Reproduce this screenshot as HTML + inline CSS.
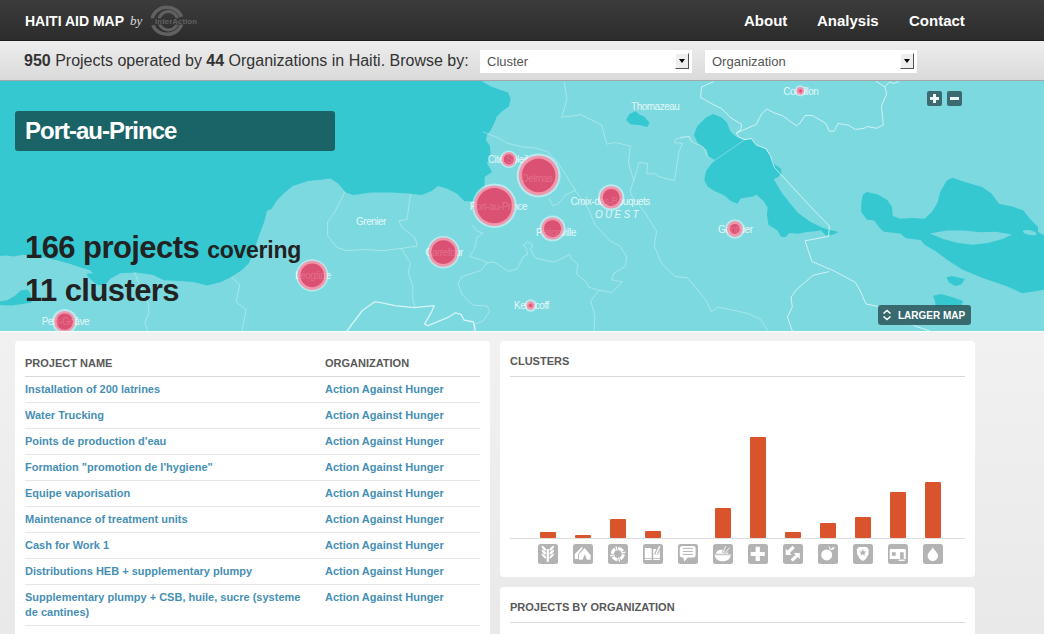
<!DOCTYPE html>
<html><head><meta charset="utf-8"><title>Haiti Aid Map</title>
<style>
*{box-sizing:border-box;margin:0;padding:0}
html,body{width:1044px;height:634px;overflow:hidden;background:#efefef;background:linear-gradient(#f1f1f1 332px,#e9e9e9 634px);font-family:"Liberation Sans",Arial,sans-serif;}
body{position:relative}
#hdr{position:absolute;left:0;top:0;width:1044px;height:41px;background:linear-gradient(#3c3c3c,#2c2c2c);border-bottom:1px solid #1c1c1c}
#hdr .t{position:absolute;left:25px;top:13px;font-weight:bold;font-size:14px;color:#fff;line-height:16px;white-space:nowrap}
#hdr .by{position:absolute;left:130px;top:13px;font-family:"Liberation Serif",serif;font-style:italic;font-size:13px;color:#ddd;line-height:15px}
#hdr .nav{position:absolute;top:12px;font-weight:bold;font-size:15px;color:#fff;line-height:18px}
#logo{position:absolute;left:148px;top:3px}
#sub{position:absolute;left:0;top:41px;width:1044px;height:40px;background:linear-gradient(#ededed,#dadada);border-bottom:1px solid #a5a5a5}
#sub .txt{position:absolute;left:24px;top:10px;font-size:16px;color:#333;line-height:19px;white-space:nowrap}
.sel{position:absolute;top:9px;height:23px;width:212px;background:#fff;font-size:13px;color:#555;line-height:23px;padding-left:7px}
.sel i{position:absolute;right:3px;top:3px;width:14px;height:16px;background:#eee;border:1px solid;border-color:#fff #555 #555 #fff}
.sel i:after{content:"";position:absolute;left:3px;top:5px;border:3px solid transparent;border-top:4px solid #000;border-bottom:0}
#map{position:absolute;left:0;top:81px;width:1044px;height:251px;background:#7cd9e0;overflow:hidden;border-bottom:1px solid #f8fdfd}
#map svg.m{position:absolute;left:0;top:0}
#title{position:absolute;left:15px;top:30px;width:320px;height:40px;background:#1a6367;border-radius:3px;color:#fff;font-weight:bold;font-size:24px;letter-spacing:-1px;line-height:40px;padding-left:10px}
.st{position:absolute;left:25px;color:#222;font-weight:bold;font-size:31px;letter-spacing:-0.57px;line-height:36px;white-space:nowrap}
.st small{font-size:23px;letter-spacing:-0.25px}
.zb{position:absolute;top:10px;width:15px;height:15px;background:#3b6b70;border-radius:2px}
.zb:before{content:"";position:absolute;left:3px;top:6px;width:9px;height:3px;background:#eefafa}
.zb.p:after{content:"";position:absolute;left:6px;top:3px;width:3px;height:9px;background:#eefafa}
#lm{position:absolute;left:878px;top:224px;width:93px;height:20px;background:rgba(45,85,90,0.85);border-radius:3px;color:#fff;font-weight:bold;font-size:10px;line-height:22.500px;padding-left:20px}
#lm svg{position:absolute;left:4px;top:4px}
.panel{position:absolute;background:#fff;border-radius:4px}
.ph{position:absolute;left:10px;top:14px;font-weight:bold;font-size:11px;color:#595959;line-height:13px;white-space:nowrap}
.hl{position:absolute;left:10px;top:35px;width:455px;height:1px;background:#d9d9d9}
.row{position:relative;margin-left:10px;width:455px;border-bottom:1px solid #e6e6e6;padding:5px 0 5px 0;font-weight:bold;font-size:11px;line-height:15px;color:#468fb4;display:flex}
.row .c1{width:300px;padding-right:20px}
.row .c2{width:155px}
.bar{position:absolute;bottom:97px;width:16px;background:#d9532c;border-radius:1px}
.ico{position:absolute;top:544px}
</style></head><body>
<div id="hdr">
 <div class="t">HAITI AID MAP</div><div class="by">by</div>
 <svg id="logo" width="56" height="36" viewBox="0 0 56 36"><defs><clipPath id="lc"><path d="M0 0h56v15.200H0zM0 21.500h56V36H0z"/></clipPath></defs><g fill="none" stroke="#616161" clip-path="url(#lc)"><ellipse cx="19" cy="17.800" rx="15" ry="13.500" stroke-width="3.600" stroke-dasharray="40 3 42 5"/><circle cx="20.300" cy="17.700" r="9.300" stroke-width="3"/></g><text x="7" y="20.900" font-family="Liberation Sans, Arial, sans-serif" font-weight="bold" font-size="7.600" fill="#626262" textLength="42">InterAction</text></svg>
 <div class="nav" style="left:744px">About</div>
 <div class="nav" style="left:817px">Analysis</div>
 <div class="nav" style="left:909px">Contact</div>
</div>
<div id="sub">
 <div class="txt"><b>950</b> Projects operated by <b>44</b> Organizations in Haiti. Browse by:</div>
 <div class="sel" style="left:480px">Cluster<i></i></div>
 <div class="sel" style="left:705px">Organization<i></i></div>
</div>
<div id="map">
<svg class="m" width="1044" height="250" viewBox="0 81 1044 250">
<polygon points="0.0,81.0 481.6,81.0 490.5,86.3 499.3,89.5 508.1,92.6 510.7,98.9 508.8,106.5 501.8,111.5 496.8,116.6 494.3,122.9 490.5,130.5 486.7,135.5 486.0,140.6 489.8,145.6 490.5,153.2 489.2,160.0 487.0,163.3 492.0,172.0 484.6,177.0 484.6,186.0 479.6,191.0 474.5,201.2 464.4,201.2 456.9,193.6 446.8,188.6 437.9,186.0 431.6,191.0 421.5,194.9 408.9,193.6 391.2,192.4 371.0,192.4 353.3,194.9 345.8,192.4 338.2,183.5 330.6,178.5 320.5,179.7 307.9,181.0 292.7,186.0 283.6,193.5 276.7,200.4 271.5,209.0 267.0,210.8 264.5,221.0 259.3,235.0 254.0,250.8 249.0,263.0 242.0,270.0 231.5,276.8 221.0,282.0 207.2,285.5 193.3,282.0 179.4,281.0 163.8,280.3 153.4,275.0 136.0,272.5 120.4,273.3 110.6,278.4 106.0,284.0 98.0,285.3 92.0,280.7 87.5,276.0 86.4,273.8 93.3,273.2 90.0,270.3 80.6,267.5 69.0,263.4 57.6,260.5 46.0,257.7 34.5,256.0 23.0,254.8 13.8,256.5 5.8,255.4 0.0,256.0" fill="#35c8d1"/>
<polygon points="0.0,301.4 7.0,300.3 15.0,295.7 20.7,290.5 27.6,289.4 30.5,293.4 31.7,302.6 20.7,304.3 11.5,305.5 0.0,305.0" fill="#35c8d1"/>
<polygon points="713.0,113.9 721.7,117.4 726.9,122.6 730.3,131.3 735.6,136.5 744.2,139.9 751.2,139.0 756.4,145.0 765.0,148.6 770.3,155.6 774.6,164.2 780.7,168.6 781.6,172.9 778.0,177.3 773.8,179.0 777.2,185.0 782.4,193.8 789.4,202.6 798.1,213.0 810.3,221.7 822.4,227.7 831.1,230.3 838.9,232.0 832.8,234.7 825.9,235.6 820.7,230.3 815.5,231.2 806.8,232.0 798.1,233.8 789.4,233.0 785.1,237.3 780.8,236.4 777.3,230.3 768.6,225.1 766.9,214.7 767.7,207.8 763.4,200.8 756.5,194.8 753.0,196.5 746.0,197.5 740.8,198.6 737.4,203.8 730.4,200.8 724.3,195.5 714.7,191.0 707.8,186.8 704.3,179.9 706.0,171.2 710.4,165.0 714.7,160.8 708.6,157.3 706.9,150.3 697.4,142.5 693.9,134.7 697.4,126.0 706.0,117.4" fill="#35c8d1"/>
<polygon points="866.8,192.0 877.9,194.5 887.2,200.0 891.9,206.6 892.8,215.9 900.3,218.7 913.3,218.1 924.5,218.7 931.9,212.1 937.5,202.8 940.3,191.7 946.8,180.5 952.4,177.7 965.5,182.3 982.2,187.0 991.5,193.5 999.0,203.8 1012.0,206.6 1023.2,210.3 1030.6,219.6 1038.0,227.0 1038.0,231.7 1044.0,235.4 1044.0,289.7 1022.1,293.2 1006.3,286.1 983.4,278.2 962.2,269.4 948.1,260.6 935.7,251.2 924.5,244.7 920.8,240.0 905.9,238.2 900.3,233.6 883.5,231.7 879.8,228.0 874.2,220.5 866.8,219.6 861.2,212.0 861.2,202.8 863.0,194.5" fill="#35c8d1"/>
<polygon points="626.0,120.0 629.4,113.9 635.5,111.3 639.8,114.7 644.2,116.5 649.4,122.5 647.6,126.9 639.0,125.1 630.3,124.3" fill="#35c8d1"/>
<polygon points="946.4,277.3 951.6,276.0 964.9,279.0 961.3,284.4 955.2,286.0 949.0,282.6" fill="#35c8d1"/>
<polygon points="933.0,295.8 941.0,294.0 953.4,297.6 963.0,301.0 961.3,306.4 935.8,307.3 935.0,301.0" fill="#35c8d1"/>
<polygon points="930.0,233.6 946.8,230.4 963.6,230.4 980.4,232.3 995.3,231.7 1012.0,234.5 1002.7,239.0 987.8,242.9 972.9,244.7 958.0,242.9 943.1,239.0" fill="#7cd9e0"/>
<ellipse cx="1029.7" cy="232.6" rx="7" ry="2.3" transform="rotate(12 1029.7 232.6)" fill="#7cd9e0"/>
<g fill="none" stroke="#fff" stroke-opacity="0.42" stroke-width="0.8" stroke-linejoin="round">
<polyline points="564.3,81.7 566.9,99.0 561.7,117.3 580.8,114.7 601.6,125.0 606.8,144.2 615.5,142.5 630.3,146.0 628.5,163.3 633.8,180.7 630.3,190.0"/>
<polyline points="633.8,180.7 639.0,162.5 647.6,163.3 646.8,173.8 656.3,173.8 658.0,176.4 674.5,180.7 678.9,152.0 682.4,143.4 674.5,142.5 675.4,139.0 689.3,136.4 692.8,142.5 703.2,146.8 707.5,156.4 714.7,160.4 745.0,139.6"/>
<polyline points="680.0,137.3 688.7,136.5 691.3,142.5"/>
<polyline points="344.8,191.9 334.5,212.6 327.6,221.9 327.6,235.7 336.8,247.2 346.0,250.7 364.4,249.5 382.9,250.7 401.3,248.4 417.4,246.0 415.0,238.0 401.3,226.5 399.0,220.7 407.0,219.6 410.5,194.2"/>
<polyline points="401.3,248.4 410.5,263.3 408.2,272.6 412.8,286.4 412.8,300.2 415.0,307.0"/>
<polyline points="472.7,225.0 475.8,230.3 483.2,233.4 476.9,237.6 474.8,248.2 469.5,256.6 481.1,259.8 487.4,262.9 493.8,261.9 508.5,271.4 516.9,269.3 523.3,256.6 527.5,254.5 526.4,248.2 523.3,245.0 527.5,241.4 532.7,245.0 530.6,249.2 534.9,257.7 546.4,260.8 554.9,261.9 569.6,254.5 571.7,258.7 578.1,265.0 576.0,273.5 586.5,281.9 588.6,287.2 599.1,290.3 611.8,292.4 618.1,286.1 622.3,281.9 611.8,279.8 613.9,273.5 625.5,266.1 626.5,256.6 620.2,246.1 609.7,240.8 603.3,233.4 595.0,225.0 588.7,209.5 575.5,190.6 566.0,175.4 558.4,163.1 548.0,152.0 535.7,148.0 522.5,147.0 507.3,143.2 497.9,137.6 482.7,131.9"/>
<polyline points="487.4,262.9 481.1,270.3 462.1,276.6 457.9,283.0 462.1,294.5 472.7,305.1 487.4,306.1 489.5,311.4 483.2,320.9 474.8,324.1 473.7,331.0"/>
<polyline points="599.1,290.3 590.7,300.9 594.9,315.6 593.9,331.0"/>
<polyline points="575.5,190.6 566.0,194.4 558.4,203.8 552.7,205.7 549.0,198.1"/>
<polyline points="630.3,190.0 631.0,194.7 644.4,211.8 656.7,231.3 654.2,246.0 661.5,263.0 675.0,276.5 687.2,277.8 695.8,287.5 705.5,299.7 711.6,312.0 717.8,307.0 747.0,313.2 760.5,319.3 766.6,329.0 768.0,331.0"/>
<polyline points="134.5,272.3 139.7,285.0 148.0,302.4 149.0,312.7 144.8,323.0 148.0,331.0"/>
<polyline points="231.5,277.0 239.8,285.0 236.0,301.6 246.0,309.8 242.0,331.0"/>
</g><g fill="none" stroke="#fff" stroke-opacity="0.72" stroke-width="0.9" stroke-linejoin="round">
<polyline points="713.6,81.7 701.5,87.0 700.6,97.4 711.3,103.5 721.7,108.7 730.3,117.4 741.6,124.3 740.8,129.5 736.4,133.0 739.0,137.3 745.1,139.6 751.2,138.5 756.4,145.1 766.0,148.6 770.3,155.6 774.6,167.7 813.7,210.0 829.4,226.0 828.5,236.4 805.0,240.8 812.0,261.6 832.8,270.3 855.4,282.4 859.8,290.0 866.0,304.0 890.0,309.0 915.0,326.0 930.0,331.0"/>
<polyline points="736.4,133.0 756.4,124.3 761.6,113.9 766.8,109.0 774.6,113.0 782.4,115.6 796.3,125.7 799.8,123.4 805.0,115.6 812.0,115.3 825.8,123.4 829.3,131.3 834.5,130.9 838.0,123.4 848.4,125.2 855.5,129.5 864.2,128.3 867.6,126.5 876.3,128.3 883.3,125.0 881.5,106.0 886.7,93.9 885.0,86.9 876.3,81.4"/>
<polyline points="885.0,86.9 889.3,82.0 893.7,83.5 898.9,81.4"/>
<polyline points="829.0,271.6 813.0,275.3 796.0,290.0 791.0,297.3 792.3,307.0 787.4,316.9 792.3,331.0"/>
</g>
<g fill="none" stroke="#fff" stroke-opacity="0.7" stroke-width="1.3" stroke-linejoin="round">
<polyline points="347.0,331.0 353.7,322.0 362.4,310.5 374.8,301.8 379.6,302.4 395.0,305.7 414.0,307.6 434.2,305.7 431.3,312.4 424.6,323.9 427.5,325.8 448.6,317.2 455.3,312.8 461.0,314.3 463.9,320.0 473.5,322.0 475.4,331.0"/>
</g>
<g font-family="Liberation Sans, Arial, sans-serif" font-size="10" letter-spacing="-0.5" fill="#fff" fill-opacity="0.82" text-anchor="middle">
<text x="507.6" y="162.6">Cité Soleil</text>
<text x="536.9" y="181.5">Delmas</text>
<text x="498.4" y="210.4">Port-au-Prince</text>
<text x="556.0" y="235.7">Pétionville</text>
<text x="610.2" y="204.8">Croix-des-Bouquets</text>
<text x="444.0" y="255.9">Carrefour</text>
<text x="531.4" y="308.9">Kenscoff</text>
<text x="312.8" y="278.9">Léogâne</text>
<text x="65.3" y="325.4">Petit-Goâve</text>
<text x="735.3" y="233.0">Ganthier</text>
<text x="800.8" y="94.8">Cornillon</text>
<text x="371" y="225.2">Grenier</text>
<text x="655.2" y="109.5">Thomazeau</text>
<text x="618" y="217.5" font-size="10" font-style="italic" letter-spacing="2.3">OUEST</text>
</g>
<circle cx="508.8" cy="159.3" r="8.8" fill="#fff" fill-opacity="0.45"/><circle cx="508.8" cy="159.3" r="7.2" fill="#f292a9" fill-opacity="0.95"/><circle cx="508.8" cy="159.3" r="5.1" fill="#d84d71" fill-opacity="0.95"/>
<clipPath id="c0"><circle cx="508.8" cy="159.3" r="7.2"/></clipPath><text clip-path="url(#c0)" x="507.6" y="162.6" font-family="Liberation Sans, Arial, sans-serif" font-size="10" letter-spacing="-0.5" fill="#ffb3c4" fill-opacity="0.3" text-anchor="middle">Cité Soleil</text>
<circle cx="538.6" cy="175.4" r="22" fill="#fff" fill-opacity="0.45"/><circle cx="538.6" cy="175.4" r="19.9" fill="#f292a9" fill-opacity="0.95"/><circle cx="538.6" cy="175.4" r="16.8" fill="#d84d71" fill-opacity="0.95"/>
<clipPath id="c1"><circle cx="538.6" cy="175.4" r="19.9"/></clipPath><text clip-path="url(#c1)" x="536.9" y="181.5" font-family="Liberation Sans, Arial, sans-serif" font-size="10" letter-spacing="-0.5" fill="#ffb3c4" fill-opacity="0.3" text-anchor="middle">Delmas</text>
<circle cx="494.4" cy="205.7" r="22.3" fill="#fff" fill-opacity="0.45"/><circle cx="494.4" cy="205.7" r="20.3" fill="#f292a9" fill-opacity="0.95"/><circle cx="494.4" cy="205.7" r="17.6" fill="#d84d71" fill-opacity="0.95"/>
<clipPath id="c2"><circle cx="494.4" cy="205.7" r="20.3"/></clipPath><text clip-path="url(#c2)" x="498.4" y="210.4" font-family="Liberation Sans, Arial, sans-serif" font-size="10" letter-spacing="-0.5" fill="#ffb3c4" fill-opacity="0.3" text-anchor="middle">Port-au-Prince</text>
<circle cx="552.5" cy="228.5" r="13" fill="#fff" fill-opacity="0.45"/><circle cx="552.5" cy="228.5" r="11" fill="#f292a9" fill-opacity="0.95"/><circle cx="552.5" cy="228.5" r="8.6" fill="#d84d71" fill-opacity="0.95"/>
<clipPath id="c3"><circle cx="552.5" cy="228.5" r="11"/></clipPath><text clip-path="url(#c3)" x="556.0" y="235.7" font-family="Liberation Sans, Arial, sans-serif" font-size="10" letter-spacing="-0.5" fill="#ffb3c4" fill-opacity="0.3" text-anchor="middle">Pétionville</text>
<circle cx="611.2" cy="197.4" r="13.2" fill="#fff" fill-opacity="0.45"/><circle cx="611.2" cy="197.4" r="11.2" fill="#f292a9" fill-opacity="0.95"/><circle cx="611.2" cy="197.4" r="8.5" fill="#d84d71" fill-opacity="0.95"/>
<clipPath id="c4"><circle cx="611.2" cy="197.4" r="11.2"/></clipPath><text clip-path="url(#c4)" x="610.2" y="204.8" font-family="Liberation Sans, Arial, sans-serif" font-size="10" letter-spacing="-0.5" fill="#ffb3c4" fill-opacity="0.3" text-anchor="middle">Croix-des-Bouquets</text>
<circle cx="443.4" cy="252.2" r="16.3" fill="#fff" fill-opacity="0.45"/><circle cx="443.4" cy="252.2" r="14.6" fill="#f292a9" fill-opacity="0.95"/><circle cx="443.4" cy="252.2" r="11.9" fill="#d84d71" fill-opacity="0.95"/>
<clipPath id="c5"><circle cx="443.4" cy="252.2" r="14.6"/></clipPath><text clip-path="url(#c5)" x="444.0" y="255.9" font-family="Liberation Sans, Arial, sans-serif" font-size="10" letter-spacing="-0.5" fill="#ffb3c4" fill-opacity="0.3" text-anchor="middle">Carrefour</text>
<circle cx="530.6" cy="305.5" r="6.3" fill="#fff" fill-opacity="0.45"/><circle cx="530.6" cy="305.5" r="4.2" fill="#f292a9" fill-opacity="0.95"/><circle cx="530.6" cy="305.5" r="2.1" fill="#d84d71" fill-opacity="0.95"/>
<clipPath id="c6"><circle cx="530.6" cy="305.5" r="4.2"/></clipPath><text clip-path="url(#c6)" x="531.4" y="308.9" font-family="Liberation Sans, Arial, sans-serif" font-size="10" letter-spacing="-0.5" fill="#ffb3c4" fill-opacity="0.3" text-anchor="middle">Kenscoff</text>
<circle cx="312.2" cy="275.4" r="16.1" fill="#fff" fill-opacity="0.45"/><circle cx="312.2" cy="275.4" r="14.6" fill="#f292a9" fill-opacity="0.95"/><circle cx="312.2" cy="275.4" r="11.8" fill="#d84d71" fill-opacity="0.95"/>
<clipPath id="c7"><circle cx="312.2" cy="275.4" r="14.6"/></clipPath><text clip-path="url(#c7)" x="312.8" y="278.9" font-family="Liberation Sans, Arial, sans-serif" font-size="10" letter-spacing="-0.5" fill="#ffb3c4" fill-opacity="0.3" text-anchor="middle">Léogâne</text>
<circle cx="64.7" cy="321.6" r="12.7" fill="#fff" fill-opacity="0.45"/><circle cx="64.7" cy="321.6" r="10.5" fill="#f292a9" fill-opacity="0.95"/><circle cx="64.7" cy="321.6" r="8.2" fill="#d84d71" fill-opacity="0.95"/>
<clipPath id="c8"><circle cx="64.7" cy="321.6" r="10.5"/></clipPath><text clip-path="url(#c8)" x="65.3" y="325.4" font-family="Liberation Sans, Arial, sans-serif" font-size="10" letter-spacing="-0.5" fill="#ffb3c4" fill-opacity="0.3" text-anchor="middle">Petit-Goâve</text>
<circle cx="734.9" cy="229" r="9.8" fill="#fff" fill-opacity="0.45"/><circle cx="734.9" cy="229" r="7.9" fill="#f292a9" fill-opacity="0.95"/><circle cx="734.9" cy="229" r="5.0" fill="#d84d71" fill-opacity="0.95"/>
<clipPath id="c9"><circle cx="734.9" cy="229" r="7.9"/></clipPath><text clip-path="url(#c9)" x="735.3" y="233.0" font-family="Liberation Sans, Arial, sans-serif" font-size="10" letter-spacing="-0.5" fill="#ffb3c4" fill-opacity="0.3" text-anchor="middle">Ganthier</text>
<circle cx="800.3" cy="90.8" r="5.6" fill="#fff" fill-opacity="0.45"/><circle cx="800.3" cy="90.8" r="3.9" fill="#f292a9" fill-opacity="0.95"/><circle cx="800.3" cy="90.8" r="1.9" fill="#d84d71" fill-opacity="0.95"/>
<clipPath id="c10"><circle cx="800.3" cy="90.8" r="3.9"/></clipPath><text clip-path="url(#c10)" x="800.8" y="94.8" font-family="Liberation Sans, Arial, sans-serif" font-size="10" letter-spacing="-0.5" fill="#ffb3c4" fill-opacity="0.3" text-anchor="middle">Cornillon</text>
</svg>
<div id="title">Port-au-Prince</div>
<div class="st" style="top:149.200px">166 projects <small>covering</small></div><div class="st" style="top:191.600px">11 clusters</div>
<div class="zb p" style="left:927px"></div><div class="zb" style="left:947px"></div>
<div id="lm"><svg width="10" height="12" viewBox="0 0 10 12"><path d="M1.500 4.500L5 1.500 8.500 4.500M1.500 7.500L5 10.500 8.500 7.500" fill="none" stroke="#fff" stroke-width="1.600"/></svg>LARGER MAP</div>
</div>
<div class="panel" id="p1" style="left:15px;top:341px;width:475px;height:300px">
 <div class="ph" style="top:16px">PROJECT NAME</div><div class="ph" style="left:310px;top:16px">ORGANIZATION</div>
 <div class="hl"></div>
 <div style="position:absolute;left:0;top:36px"><div class="row"><span class="c1">Installation of 200 latrines</span><span class="c2">Action Against Hunger</span></div><div class="row"><span class="c1">Water Trucking</span><span class="c2">Action Against Hunger</span></div><div class="row"><span class="c1">Points de production d'eau</span><span class="c2">Action Against Hunger</span></div><div class="row"><span class="c1">Formation &quot;promotion de l'hygiene&quot;</span><span class="c2">Action Against Hunger</span></div><div class="row"><span class="c1">Equipe vaporisation</span><span class="c2">Action Against Hunger</span></div><div class="row"><span class="c1">Maintenance of treatment units</span><span class="c2">Action Against Hunger</span></div><div class="row"><span class="c1">Cash for Work 1</span><span class="c2">Action Against Hunger</span></div><div class="row"><span class="c1">Distributions HEB + supplementary plumpy</span><span class="c2">Action Against Hunger</span></div><div class="row"><span class="c1">Supplementary plumpy + CSB, huile, sucre (systeme de cantines)</span><span class="c2">Action Against Hunger</span></div></div>
</div>
<div class="panel" id="p2" style="left:500px;top:341px;width:475px;height:236px">
 <div class="ph">CLUSTERS</div><div class="hl"></div>
 <div style="position:absolute;left:10px;top:197px;width:455px;height:1px;background:#ddd"></div>
</div>
<div style="position:absolute;left:0;top:0;width:1044px;height:635px;pointer-events:none">
 <div style="position:absolute;left:0;top:0;width:1044px;height:635px"><div class="bar" style="left:539.5px;height:6px"></div><div class="bar" style="left:574.5px;height:3px"></div><div class="bar" style="left:609.5px;height:19px"></div><div class="bar" style="left:644.5px;height:7px"></div><div class="bar" style="left:714.5px;height:30px"></div><div class="bar" style="left:749.5px;height:101px"></div><div class="bar" style="left:784.5px;height:6px"></div><div class="bar" style="left:819.5px;height:15px"></div><div class="bar" style="left:854.5px;height:21px"></div><div class="bar" style="left:889.5px;height:46px"></div><div class="bar" style="left:924.5px;height:56px"></div></div>
 <svg class="ico" style="left:538px" width="20" height="20" viewBox="0 0 20 20"><rect width="20" height="20" rx="2.500" fill="#b3b3b3"/><g fill="#fff"><path d="M8.700 5.100h2.200v12.700H8.700z"/><ellipse cx="5.900" cy="4.3" rx="3.100" ry="1.200" transform="rotate(45 5.900 4.3)"/><ellipse cx="13.700" cy="4.3" rx="3.100" ry="1.200" transform="rotate(-45 13.700 4.3)"/><ellipse cx="5.900" cy="8.1" rx="3.100" ry="1.200" transform="rotate(45 5.900 8.1)"/><ellipse cx="13.700" cy="8.1" rx="3.100" ry="1.200" transform="rotate(-45 13.700 8.1)"/><ellipse cx="5.900" cy="12" rx="3.100" ry="1.200" transform="rotate(45 5.900 12)"/><ellipse cx="13.700" cy="12" rx="3.100" ry="1.200" transform="rotate(-45 13.700 12)"/></g></svg><svg class="ico" style="left:573px" width="20" height="20" viewBox="0 0 20 20"><rect width="20" height="20" rx="2.500" fill="#b3b3b3"/><g fill="#fff"><path d="M1.800 10L8.700 3.100 9.900 3.700 5 10.300V14.900H1.800z M5.900 10.300L11.600 4 17.600 10.900V15.700H13.900L11.800 10.300 9.600 15.700H5.900z"/></g></svg><svg class="ico" style="left:608px" width="20" height="20" viewBox="0 0 20 20"><rect width="20" height="20" rx="2.500" fill="#b3b3b3"/><g fill="#fff"><path d="M10.09 4.56A5.45 5.45 0 0 1 14.57 7.36 M15.24 10.29A5.45 5.45 0 0 1 12.44 14.77 M9.51 15.44A5.45 5.45 0 0 1 5.03 12.64 M4.36 9.71A5.45 5.45 0 0 1 7.16 5.23" fill="none" stroke="#fff" stroke-width="3.100"/><line x1="9.04" y1="6.69" x2="8.02" y2="2.30" stroke="#fff" stroke-width="1.300"/><line x1="13.11" y1="9.24" x2="17.50" y2="8.22" stroke="#fff" stroke-width="1.300"/><line x1="10.56" y1="13.31" x2="11.58" y2="17.70" stroke="#fff" stroke-width="1.300"/><line x1="6.49" y1="10.76" x2="2.10" y2="11.78" stroke="#fff" stroke-width="1.300"/></g></svg><svg class="ico" style="left:643px" width="20" height="20" viewBox="0 0 20 20"><rect width="20" height="20" rx="2.500" fill="#b3b3b3"/><g fill="#fff"><path d="M1.800 4h5.400a1.500 1.500 0 0 1 1.500 1.500V14H1.800z M1.800 14.700h6.900v1.200H1.800z M10.200 14.700h6.600v1.200h-6.600z M10.200 5h6.600v9h-6.600z"/><path d="M16.600 2.300L12.700 11" stroke="#b3b3b3" stroke-width="3.600" fill="none"/><path d="M11.800 11.800h5" stroke="#fff" stroke-width="2.400" fill="none"/><path d="M16.700 2.200L12.900 10.800" stroke="#fff" stroke-width="1.500" fill="none"/></g></svg><svg class="ico" style="left:678px" width="20" height="20" viewBox="0 0 20 20"><rect width="20" height="20" rx="2.500" fill="#b3b3b3"/><g fill="#fff"><path d="M4.300 2.100h10.800a2.500 2.500 0 0 1 2.500 2.500v6.300a2.500 2.500 0 0 1-2.500 2.500H9.900L6.100 17.500 5.300 13.400H4.300a2.500 2.500 0 0 1-2.500-2.500V4.600a2.500 2.500 0 0 1 2.500-2.500z"/><path d="M4.800 4.400h10M4.800 7.400h10M4.800 10.400h10" stroke="#b3b3b3" stroke-width="1" fill="none"/></g></svg><svg class="ico" style="left:713px" width="20" height="20" viewBox="0 0 20 20"><rect width="20" height="20" rx="2.500" fill="#b3b3b3"/><g fill="#fff"><path d="M1.700 10.400h16.100c0 4-3.400 6.800-8.050 6.800S1.700 14.400 1.700 10.400z"/><path d="M2.700 9.700c.5-2.300 2.600-4 5.200-4 1.600 0 3 .4 4.300 1.300 1.600 1 2.800 1.800 3.400 2.700z"/><path d="M1.700 10.900h16.100" stroke="#b3b3b3" stroke-width=".5" fill="none"/><path d="M9.600 8.900L12.800 2.200M11.600 9.400L16.500 3.700" stroke="#b3b3b3" stroke-width="2.200" fill="none"/><path d="M9.600 8.900L12.800 2.200M11.600 9.400L16.500 3.700" stroke="#fff" stroke-width=".9" fill="none"/></g></svg><svg class="ico" style="left:748px" width="20" height="20" viewBox="0 0 20 20"><rect width="20" height="20" rx="2.500" fill="#b3b3b3"/><g fill="#fff"><path d="M7.650 2.800h4.200V8h4.950v4H11.850v4.900h-4.200V12H2.700V8h4.950z"/></g></svg><svg class="ico" style="left:783px" width="20" height="20" viewBox="0 0 20 20"><rect width="20" height="20" rx="2.500" fill="#b3b3b3"/><g fill="#fff"><path d="M2.700 4.800V10.900H8.700L6.900 9.100 11.800 3.900 9.600 1.700 4.500 6.600z M16.800 14.900V8.900H10.700L12.600 10.800 7.600 15.600 9.800 17.800 14.900 13z"/></g></svg><svg class="ico" style="left:818px" width="20" height="20" viewBox="0 0 20 20"><rect width="20" height="20" rx="2.500" fill="#b3b3b3"/><g fill="#fff"><circle cx="8.700" cy="10.900" r="5.500"/><path d="M12.500 6L11.100 2.500" stroke="#fff" stroke-width="1" fill="none"/><path d="M12.900 5.900C13 4 14.500 3 16.600 3 16.400 5 15 6 12.900 5.900z"/></g></svg><svg class="ico" style="left:853px" width="20" height="20" viewBox="0 0 20 20"><rect width="20" height="20" rx="2.500" fill="#b3b3b3"/><g fill="#fff"><path d="M5.600 3.100h8.300L15.700 5.700 15.400 10.600 12.800 14.900 9.900 16.900 7 14.900 4.300 10.600 3.700 5.700z"/><polygon points="9.80,4.80 10.74,7.41 13.51,7.49 11.32,9.19 12.09,11.86 9.80,10.30 7.51,11.86 8.28,9.19 6.09,7.49 8.86,7.41" fill="#b3b3b3"/></g></svg><svg class="ico" style="left:888px" width="20" height="20" viewBox="0 0 20 20"><rect width="20" height="20" rx="2.500" fill="#b3b3b3"/><g fill="#fff"><path d="M2.700 4.900h14.100a1 1 0 0 1 1 1v9.200H1.700V5.900a1 1 0 0 1 1-1z"/><path d="M3.900 8.200h3.800v3.500H3.900z M12.100 8.200h3.600v6.900h-3.600z" fill="#b3b3b3"/><path d="M10.600 15.600h6.200v1.300h-6.200z"/></g></svg><svg class="ico" style="left:923px" width="20" height="20" viewBox="0 0 20 20"><rect width="20" height="20" rx="2.500" fill="#b3b3b3"/><g fill="#fff"><path d="M9.800 3.200C10.600 6 15 8.300 15 11.800a5.200 5.200 0 0 1-10.400 0C4.600 8.300 9 6 9.800 3.200z"/></g></svg>
</div>
<div class="panel" id="p3" style="left:500px;top:587px;width:475px;height:60px">
 <div class="ph">PROJECTS BY ORGANIZATION</div><div class="hl"></div>
</div>
</body></html>
